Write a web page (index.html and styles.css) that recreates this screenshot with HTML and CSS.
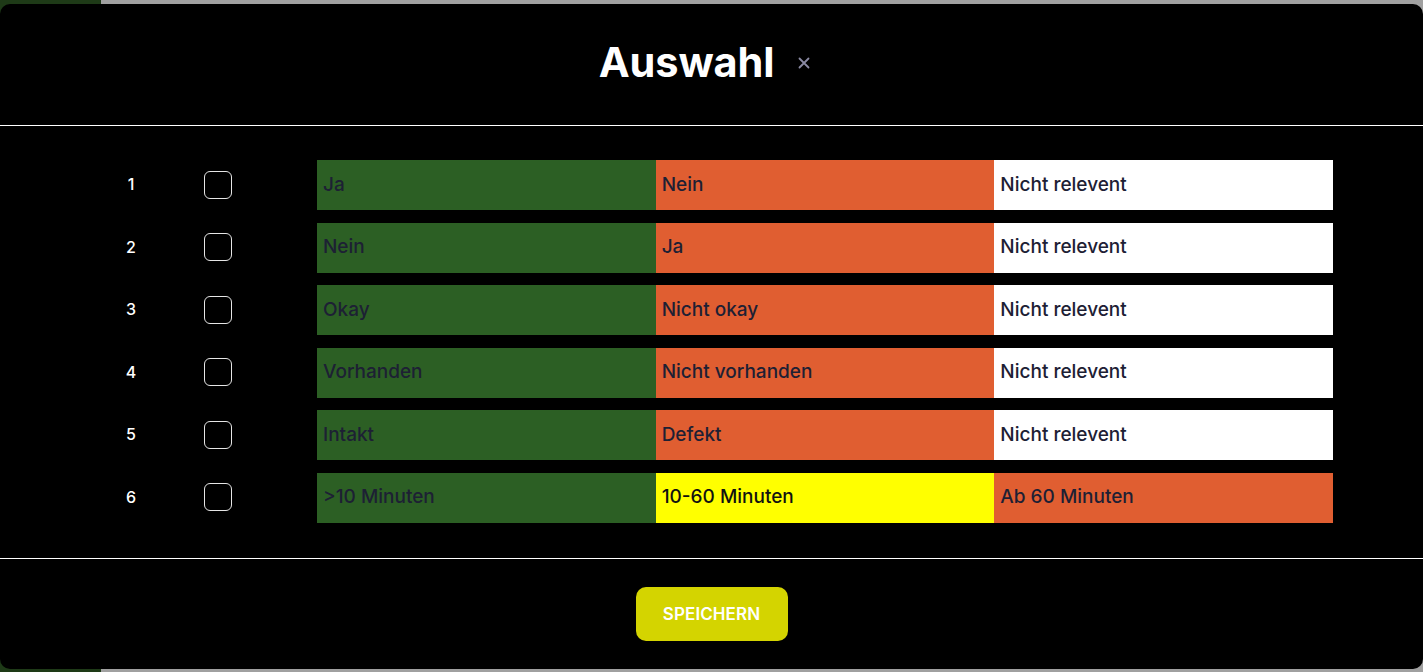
FILE: index.html
```html
<!DOCTYPE html>
<html lang="de">
<head>
<meta charset="utf-8">
<title>Auswahl</title>
<link rel="stylesheet" href="styles.css">
</head>
<body>
<div class="modal">
  <header class="modal-header">
    <h1 class="title">Auswahl</h1>
    <button class="close" aria-label="Schließen">
      <svg width="14" height="14" viewBox="0 0 14 14"><path d="M2.5 2.5 L11.5 11.5 M11.5 2.5 L2.5 11.5" stroke="#8b8aa3" stroke-width="1.8" stroke-linecap="round"/></svg>
    </button>
  </header>
  <main class="modal-body">
    <div class="row"><span class="num">1</span><span class="check-cell"><span class="check"></span></span><span class="cell green">Ja</span><span class="cell orange">Nein</span><span class="cell white">Nicht relevent</span></div>
    <div class="row"><span class="num">2</span><span class="check-cell"><span class="check"></span></span><span class="cell green">Nein</span><span class="cell orange">Ja</span><span class="cell white">Nicht relevent</span></div>
    <div class="row"><span class="num">3</span><span class="check-cell"><span class="check"></span></span><span class="cell green">Okay</span><span class="cell orange">Nicht okay</span><span class="cell white">Nicht relevent</span></div>
    <div class="row"><span class="num">4</span><span class="check-cell"><span class="check"></span></span><span class="cell green">Vorhanden</span><span class="cell orange">Nicht vorhanden</span><span class="cell white">Nicht relevent</span></div>
    <div class="row"><span class="num">5</span><span class="check-cell"><span class="check"></span></span><span class="cell green">Intakt</span><span class="cell orange">Defekt</span><span class="cell white">Nicht relevent</span></div>
    <div class="row"><span class="num">6</span><span class="check-cell"><span class="check"></span></span><span class="cell green">&gt;10 Minuten</span><span class="cell yellow">10-60 Minuten</span><span class="cell orange">Ab 60 Minuten</span></div>
  </main>
  <footer class="modal-footer">
    <button class="save">SPEICHERN</button>
  </footer>
</div>
</body>
</html>
```
FILE: styles.css
```css
* { box-sizing: border-box; }
html, body { margin: 0; height: 100%; }
body {
  background: linear-gradient(to right, #1e3a17 0, #1e3a17 101px, #a0a0a0 101px);
  font-family: Inter, "Noto Sans", sans-serif;
  padding-top: 4px;
  overflow: hidden;
}
.modal {
  background: #000;
  height: 665px;
  border-radius: 10px;
  display: flex;
  flex-direction: column;
}
.modal-header {
  height: 122px;
  border-bottom: 1px solid #fff;
  display: flex;
  align-items: center;
  justify-content: center;
  gap: 13px;
  padding-bottom: 5px;
}
.title {
  margin: 0;
  color: #fff;
  font-size: 41.5px;
  font-weight: 700;
  letter-spacing: -0.1px;
}
.close {
  width: 37px;
  height: 34px;
  background: none;
  border: 0;
  padding: 0 4px 0 0;
  display: flex;
  align-items: center;
  justify-content: center;
  margin-top: 2px;
}
.modal-body {
  padding: 34px 90px 35px 100px;
  border-bottom: 1px solid #fff;
  display: flex;
  flex-direction: column;
  gap: 12.6px;
}
.row {
  display: grid;
  grid-template-columns: 62px 155px repeat(3, 1fr);
  height: 50px;
  align-items: stretch;
}
.num {
  color: #fff;
  font-size: 16px;
  font-weight: 500;
  display: flex;
  align-items: center;
  justify-content: center;
  padding-bottom: 2px;
}
.check-cell {
  display: flex;
  align-items: center;
  padding-left: 42px;
  padding-bottom: 1px;
}
.check {
  width: 28px;
  height: 28px;
  border: 1px solid #e6e6e6;
  border-radius: 6px;
}
.cell {
  display: flex;
  align-items: center;
  padding-left: 6px;
  padding-bottom: 2px;
  font-size: 19px;
  font-weight: 500;
  color: #1d2034;
}
.green { background: #2c5f24; }
.orange { background: #e05e31; }
.white { background: #fff; }
.yellow { background: #ffff00; color: #111; }
.modal-footer {
  flex: 1;
  display: flex;
  align-items: center;
  justify-content: center;
}
.save {
  width: 152px;
  height: 54px;
  border: 0;
  border-radius: 10px;
  background: #d4d400;
  color: #fff;
  font-family: Inter, "Noto Sans", sans-serif;
  font-size: 17px;
  font-weight: 600;
  letter-spacing: 0.1px;
}
```
